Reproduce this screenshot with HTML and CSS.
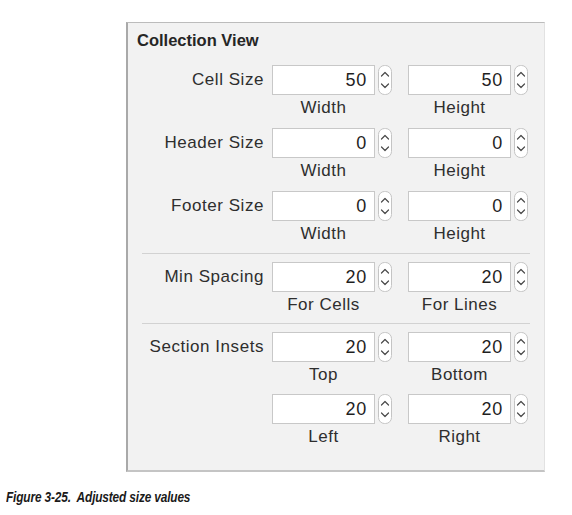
FILE: index.html
```html
<!DOCTYPE html>
<html>
<head>
<meta charset="utf-8">
<link rel="stylesheet" href="styles.css">
</head>
<body>
<div class="panel">
  <div class="title">Collection View</div>
  <div class="group first">
    <div class="row">
      <div class="label">Cell Size</div>
      <div class="control"><div class="cell"><div class="field">50</div><div class="sub">Width</div></div><svg class="stepper" viewBox="0 0 14 30"><rect x="0.5" y="0.5" width="13" height="29" rx="6"/><polyline points="3.5,11 7,7.5 10.5,11"/><polyline points="3.5,19 7,22.5 10.5,19"/></svg></div>
      <div class="control"><div class="cell"><div class="field">50</div><div class="sub">Height</div></div><svg class="stepper" viewBox="0 0 14 30"><rect x="0.5" y="0.5" width="13" height="29" rx="6"/><polyline points="3.5,11 7,7.5 10.5,11"/><polyline points="3.5,19 7,22.5 10.5,19"/></svg></div>
    </div>
    <div class="row">
      <div class="label">Header Size</div>
      <div class="control"><div class="cell"><div class="field">0</div><div class="sub">Width</div></div><svg class="stepper" viewBox="0 0 14 30"><rect x="0.5" y="0.5" width="13" height="29" rx="6"/><polyline points="3.5,11 7,7.5 10.5,11"/><polyline points="3.5,19 7,22.5 10.5,19"/></svg></div>
      <div class="control"><div class="cell"><div class="field">0</div><div class="sub">Height</div></div><svg class="stepper" viewBox="0 0 14 30"><rect x="0.5" y="0.5" width="13" height="29" rx="6"/><polyline points="3.5,11 7,7.5 10.5,11"/><polyline points="3.5,19 7,22.5 10.5,19"/></svg></div>
    </div>
    <div class="row">
      <div class="label">Footer Size</div>
      <div class="control"><div class="cell"><div class="field">0</div><div class="sub">Width</div></div><svg class="stepper" viewBox="0 0 14 30"><rect x="0.5" y="0.5" width="13" height="29" rx="6"/><polyline points="3.5,11 7,7.5 10.5,11"/><polyline points="3.5,19 7,22.5 10.5,19"/></svg></div>
      <div class="control"><div class="cell"><div class="field">0</div><div class="sub">Height</div></div><svg class="stepper" viewBox="0 0 14 30"><rect x="0.5" y="0.5" width="13" height="29" rx="6"/><polyline points="3.5,11 7,7.5 10.5,11"/><polyline points="3.5,19 7,22.5 10.5,19"/></svg></div>
    </div>
  </div>
  <div class="sep"></div>
  <div class="group">
    <div class="row">
      <div class="label">Min Spacing</div>
      <div class="control"><div class="cell"><div class="field">20</div><div class="sub">For Cells</div></div><svg class="stepper" viewBox="0 0 14 30"><rect x="0.5" y="0.5" width="13" height="29" rx="6"/><polyline points="3.5,11 7,7.5 10.5,11"/><polyline points="3.5,19 7,22.5 10.5,19"/></svg></div>
      <div class="control"><div class="cell"><div class="field">20</div><div class="sub">For Lines</div></div><svg class="stepper" viewBox="0 0 14 30"><rect x="0.5" y="0.5" width="13" height="29" rx="6"/><polyline points="3.5,11 7,7.5 10.5,11"/><polyline points="3.5,19 7,22.5 10.5,19"/></svg></div>
    </div>
  </div>
  <div class="sep sep2"></div>
  <div class="group insets">
    <div class="row">
      <div class="label">Section Insets</div>
      <div class="control"><div class="cell"><div class="field">20</div><div class="sub">Top</div></div><svg class="stepper" viewBox="0 0 14 30"><rect x="0.5" y="0.5" width="13" height="29" rx="6"/><polyline points="3.5,11 7,7.5 10.5,11"/><polyline points="3.5,19 7,22.5 10.5,19"/></svg></div>
      <div class="control"><div class="cell"><div class="field">20</div><div class="sub">Bottom</div></div><svg class="stepper" viewBox="0 0 14 30"><rect x="0.5" y="0.5" width="13" height="29" rx="6"/><polyline points="3.5,11 7,7.5 10.5,11"/><polyline points="3.5,19 7,22.5 10.5,19"/></svg></div>
    </div>
    <div class="row">
      <div class="label"></div>
      <div class="control"><div class="cell"><div class="field">20</div><div class="sub">Left</div></div><svg class="stepper" viewBox="0 0 14 30"><rect x="0.5" y="0.5" width="13" height="29" rx="6"/><polyline points="3.5,11 7,7.5 10.5,11"/><polyline points="3.5,19 7,22.5 10.5,19"/></svg></div>
      <div class="control"><div class="cell"><div class="field">20</div><div class="sub">Right</div></div><svg class="stepper" viewBox="0 0 14 30"><rect x="0.5" y="0.5" width="13" height="29" rx="6"/><polyline points="3.5,11 7,7.5 10.5,11"/><polyline points="3.5,19 7,22.5 10.5,19"/></svg></div>
    </div>
  </div>
</div>
<div class="caption">Figure 3-25.&nbsp; Adjusted size values</div>
</body>
</html>
```

FILE: styles.css
```css
html, body {
  margin: 0;
  padding: 0;
  background: #ffffff;
}

body {
  font-family: "Liberation Sans", Arial, sans-serif;
  color: #2e2e2e;
}

.panel {
  box-sizing: border-box;
  margin: 22px 0 0 126px;
  width: 419px;
  height: 450px;
  background: #f2f2f2;
  border-top: 1px solid #bcbcbc;
  border-left: 2px solid #a9a9a9;
  border-bottom: 2px solid #c4c4c4;
  border-right: 1px solid #e2e2e2;
  padding-top: 7px;
}

.title {
  font-size: 16.5px;
  font-weight: bold;
  line-height: 20px;
  padding-left: 9px;
  color: #262626;
}

.group {
  display: flex;
  flex-direction: column;
  gap: 10px;
}

.group.first {
  margin-top: 15px;
}

.group.insets {
  gap: 9px;
}

.row {
  display: flex;
  align-items: flex-start;
}

.label {
  width: 136px;
  margin-right: 8px;
  text-align: right;
  font-size: 17px;
  letter-spacing: 0.55px;
  line-height: 30px;
  color: #2e2e2e;
  white-space: nowrap;
}

.control {
  display: flex;
  align-items: flex-start;
}

.control + .control {
  margin-left: 16px;
}

.cell {
  display: flex;
  flex-direction: column;
  align-items: center;
  width: 103px;
}

.field {
  box-sizing: border-box;
  width: 103px;
  height: 30px;
  background: #ffffff;
  border: 1px solid #c8c8c8;
  text-align: right;
  font-size: 18px;
  letter-spacing: 0.8px;
  line-height: 28px;
  padding-right: 7px;
  color: #1f1f1f;
}

.sub {
  margin-top: 3px;
  font-size: 17px;
  letter-spacing: 0.5px;
  line-height: 20px;
  color: #2e2e2e;
  white-space: nowrap;
}

.stepper {
  width: 14px;
  height: 30px;
  margin-left: 3px;
  display: block;
}

.stepper rect {
  fill: #ffffff;
  stroke: #c4c4c4;
  stroke-width: 1;
}

.stepper polyline {
  fill: none;
  stroke: #4a4a4a;
  stroke-width: 1.2;
  stroke-linecap: round;
  stroke-linejoin: round;
}

.sep {
  height: 1px;
  width: 388px;
  background: #d2d2d2;
  margin: 9px 0 8px 14px;
}

.sep.sep2 {
  margin-top: 8px;
}

.caption {
  margin: 17px 0 0 6px;
  font-size: 14.5px;
  line-height: 16px;
  font-weight: bold;
  font-style: italic;
  letter-spacing: -0.2px;
  color: #1a1a1a;
  white-space: pre;
  transform: scaleX(0.82);
  transform-origin: left center;
}
```
